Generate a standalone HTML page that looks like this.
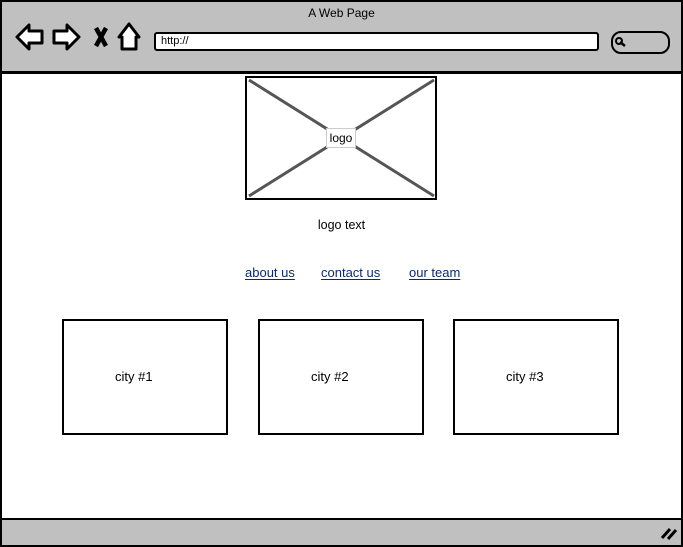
<!DOCTYPE html>
<html><head><meta charset="utf-8"><style>
body{margin:0;width:683px;height:547px;background:#fff;font-family:"Liberation Sans",sans-serif;overflow:hidden;position:relative}
.a{position:absolute}
.box{position:absolute;border:2px solid #000;background:#fff}
.city{font-size:13px;color:#000}
a{color:#0a2a6e;font-size:13px;text-decoration:underline;text-underline-offset:2px;position:absolute}
</style></head><body>
<div class="a" style="left:0px;top:0px;width:679px;height:543px;border:2px solid #000;background:#fff"></div>
<div class="a" style="left:2px;top:2px;width:679px;height:69px;background:#c0c0c0;border-bottom:3px solid #000"></div>
<div class="a" style="left:2px;top:518px;width:679px;height:25px;background:#c0c0c0;border-top:2px solid #000"></div>
<div class="a" style="left:0;top:6px;width:683px;text-align:center;font-size:12px">A Web Page</div>
<svg class="a" style="left:0;top:0" width="683" height="547">
<g fill="#fff" stroke="#000" stroke-width="3" stroke-linejoin="round">
<path d="M17 37 L29 25 L29 31 L42 31 L42 43 L29 43 L29 49 Z"/>
<path d="M79 37 L67 25 L67 31 L54 31 L54 43 L67 43 L67 49 Z"/>
<path d="M129 24 L119 37 L122 37 L122 49 L136 49 L136 37 L139 37 Z"/>
</g>
<path d="M96 28 L106 46 M106 28 L96 46" stroke="#000" stroke-width="4.5"/>
<path d="M620 42 L625 46" stroke="#000" stroke-width="2.5"/>
<circle cx="619" cy="41" r="3" fill="none" stroke="#000" stroke-width="2"/>
<path d="M662 538 L670 529 M668 539 L676 530" stroke="#000" stroke-width="3"/>
<path d="M249 80 L434 196 M434 80 L249 196" stroke="#555" stroke-width="3"/>
</svg>
<div class="a" style="left:154px;top:32px;width:436px;height:15px;border:2px solid #000;border-radius:3px;background:#fff;font-size:11px;line-height:15px;padding-left:5px">http://</div>
<div class="a" style="left:611px;top:31px;width:55px;height:19px;border:2px solid #000;border-radius:10px"></div>
<div class="box" style="left:245px;top:76px;width:188px;height:120px;background:transparent"></div>
<div class="a" style="left:326px;top:128px;width:28px;height:18px;background:#fff;border:1px solid #ccc;font-size:12px;text-align:center;line-height:18px">logo</div>
<div class="a" style="left:0;top:218px;width:683px;text-align:center;font-size:12.5px">logo text</div>
<a style="left:245px;top:265px">about us</a>
<a style="left:321px;top:265px">contact us</a>
<a style="left:409px;top:265px">our team</a>
<div class="box" style="left:62px;top:319px;width:162px;height:112px"></div>
<div class="box" style="left:258px;top:319px;width:162px;height:112px"></div>
<div class="box" style="left:453px;top:319px;width:162px;height:112px"></div>
<div class="a city" style="left:115px;top:369px">city #1</div>
<div class="a city" style="left:311px;top:369px">city #2</div>
<div class="a city" style="left:506px;top:369px">city #3</div>
</body></html>
